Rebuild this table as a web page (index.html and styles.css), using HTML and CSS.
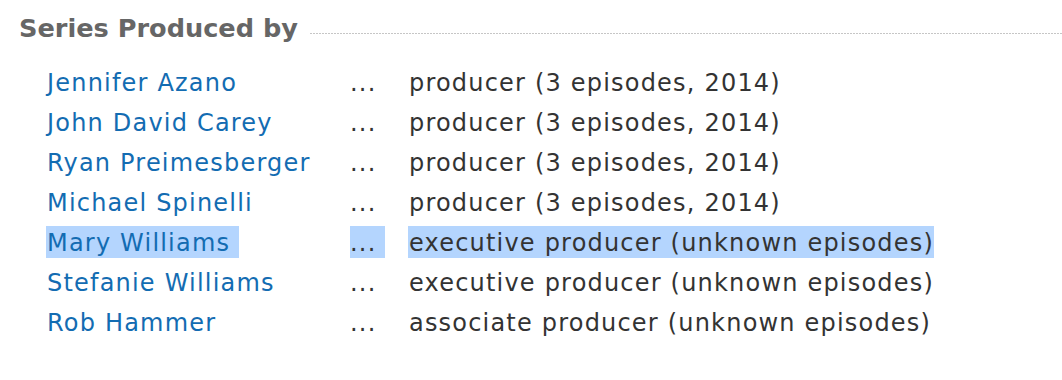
FILE: index.html
```html
<!DOCTYPE html>
<html>
<head>
<meta charset="utf-8">
<link rel="stylesheet" href="styles.css">
</head>
<body>
<div class="section">
  <div class="header">
    <h4 class="title">Series Produced by</h4>
    <div class="rule"></div>
  </div>
  <div class="credits">
    <div class="row"><a class="name" href="#">Jennifer Azano</a><span class="ellipsis">...</span><span class="credit">producer (3 episodes, 2014)</span></div>
    <div class="row"><a class="name" href="#">John David Carey</a><span class="ellipsis">...</span><span class="credit">producer (3 episodes, 2014)</span></div>
    <div class="row"><a class="name" href="#">Ryan Preimesberger</a><span class="ellipsis">...</span><span class="credit">producer (3 episodes, 2014)</span></div>
    <div class="row"><a class="name" href="#">Michael Spinelli</a><span class="ellipsis">...</span><span class="credit">producer (3 episodes, 2014)</span></div>
    <div class="row selected"><a class="name" href="#">Mary Williams&nbsp;</a><span class="ellipsis">...&nbsp;</span><span class="credit">executive producer (unknown episodes)</span></div>
    <div class="row"><a class="name" href="#">Stefanie Williams</a><span class="ellipsis">...</span><span class="credit">executive producer (unknown episodes)</span></div>
    <div class="row"><a class="name" href="#">Rob Hammer</a><span class="ellipsis">...</span><span class="credit">associate producer (unknown episodes)</span></div>
  </div>
</div>
</body>
</html>
```
FILE: styles.css
```css
html, body {
  margin: 0;
  padding: 0;
  background: #fff;
}
body {
  font-family: "DejaVu Sans", Verdana, sans-serif;
  width: 1062px;
  height: 380px;
  overflow: hidden;
}
.section {
  padding: 11px 0 0 19px;
}
.header {
  display: flex;
  align-items: flex-end;
  height: 32px;
}
.title {
  margin: 0;
  font-size: 25.6px;
  font-weight: bold;
  color: #666;
  line-height: 30px;
  white-space: nowrap;
}
.rule {
  flex: 1;
  height: 1px;
  margin: 0 0 9px 12px;
  background: repeating-linear-gradient(to right, #c6c6c6 0, #c6c6c6 2px, transparent 2px, transparent 3px);
}
.credits {
  margin: 19px 0 0 28px;
  display: flex;
  flex-direction: column;
}
.row {
  display: grid;
  grid-template-columns: 303px 59px auto;
  height: 40px;
  align-items: center;
  font-size: 24px;
  letter-spacing: 1.2px;
  line-height: 30px;
  color: #333;
}
.name,
.ellipsis,
.credit {
  justify-self: start;
  padding-top: 2px;
}
.name {
  color: #136cb2;
  text-decoration: none;
  white-space: pre;
}
.ellipsis {
  white-space: pre;
}
.credit {
  white-space: nowrap;
}
.selected .name,
.selected .ellipsis,
.selected .credit {
  background: #b4d5fe;
}
.selected .name {
  margin-left: -1px;
  padding-left: 1px;
}
.selected .credit {
  margin-left: -1px;
  padding-left: 1px;
}
```
